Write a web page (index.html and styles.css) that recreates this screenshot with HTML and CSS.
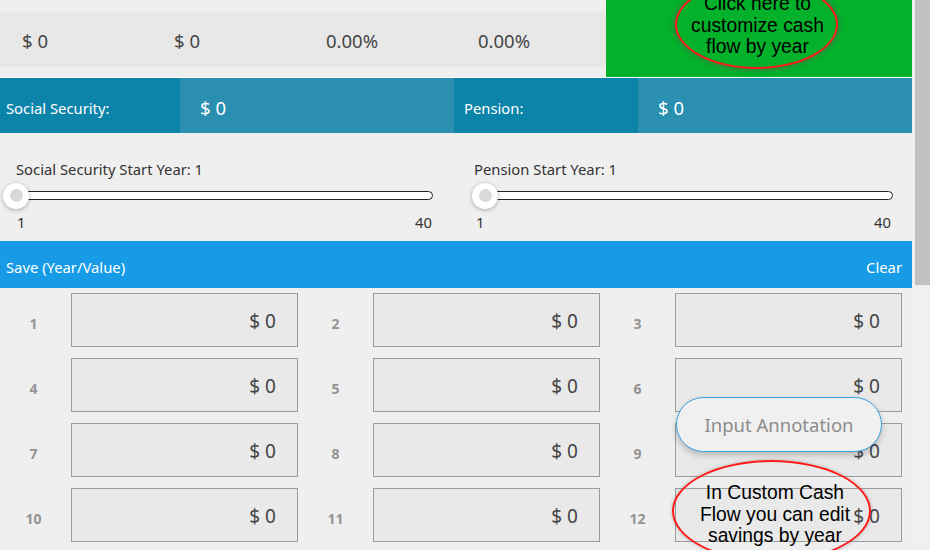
FILE: index.html
```html
<!DOCTYPE html>
<html lang="en">
<head>
<meta charset="utf-8">
<title>Cash Flow</title>
<link rel="stylesheet" href="styles.css">
</head>
<body>
<div class="page">
  <main class="content">
    <section class="summary">
      <div class="summary-values">
        <span>$ 0</span><span>$ 0</span><span>0.00%</span><span>0.00%</span>
      </div>
      <div class="custom-btn"></div>
    </section>
    <section class="income">
      <div class="inc-label">Social Security:</div>
      <div class="inc-value">$ 0</div>
      <div class="inc-label inc-label-right">Pension:</div>
      <div class="inc-value inc-value-right">$ 0</div>
    </section>
    <section class="sliders">
      <div class="slider-col">
        <div class="slider-label">Social Security Start Year: 1</div>
        <div class="slider-track"><span class="thumb"><span class="thumb-dot"></span></span></div>
        <div class="slider-scale"><span>1</span><span>40</span></div>
      </div>
      <div class="slider-col slider-col-right">
        <div class="slider-label">Pension Start Year: 1</div>
        <div class="slider-track"><span class="thumb"><span class="thumb-dot"></span></span></div>
        <div class="slider-scale"><span>1</span><span>40</span></div>
      </div>
    </section>
    <header class="save-bar"><span>Save (Year/Value)</span><span>Clear</span></header>
    <section class="year-grid">
      <div class="cell"><span class="yr">1</span><div class="box">$ 0</div></div>
      <div class="cell"><span class="yr">2</span><div class="box">$ 0</div></div>
      <div class="cell"><span class="yr">3</span><div class="box">$ 0</div></div>
      <div class="cell"><span class="yr">4</span><div class="box">$ 0</div></div>
      <div class="cell"><span class="yr">5</span><div class="box">$ 0</div></div>
      <div class="cell"><span class="yr">6</span><div class="box">$ 0</div></div>
      <div class="cell"><span class="yr">7</span><div class="box">$ 0</div></div>
      <div class="cell"><span class="yr">8</span><div class="box">$ 0</div></div>
      <div class="cell"><span class="yr">9</span><div class="box">$ 0</div></div>
      <div class="cell"><span class="yr">10</span><div class="box">$ 0</div></div>
      <div class="cell"><span class="yr">11</span><div class="box">$ 0</div></div>
      <div class="cell"><span class="yr">12</span><div class="box">$ 0</div></div>
    </section>
  </main>
  <div class="scrollbar"><div class="scroll-thumb"></div></div>

  <div class="note note-top">Click here to<br>customize cash<br>flow by year</div>
  <div class="pill">Input Annotation</div>
  <div class="note note-bottom">In Custom Cash<br>Flow you can edit<br>savings by year</div>
</div>
</body>
</html>
```
FILE: styles.css
```css
* { box-sizing: border-box; }
html, body { margin: 0; padding: 0; }
body {
  background: #efefef;
  font-family: "Noto Sans", "Open Sans", sans-serif;
  color: #333;
  overflow: hidden;
  width: 930px;
  height: 550px;
}
.page {
  position: relative;
  display: flex;
  width: 930px;
  height: 550px;
  overflow: hidden;
}
.content {
  width: 912px;
  flex: none;
}
.scrollbar {
  width: 18px;
  padding-left: 3px;
  background: #f0f0f0;
}
.scroll-thumb {
  height: 285px;
  background: #c1c1c1;
}

/* summary row */
.summary {
  display: flex;
  height: 77px;
}
.summary-values {
  width: 606px;
  height: 55px;
  margin-top: 12px;
  padding-top: 2px;
  background: #e8e8e8;
  display: grid;
  grid-template-columns: repeat(4, 152px);
  align-items: center;
  padding-left: 22px;
  font-size: 18.5px;
  color: #444;
}
.custom-btn {
  width: 306px;
  height: 77px;
  background: #03b12a;
}

/* income row */
.income {
  display: flex;
  height: 56px;
  border-top: 1px solid #ffffff;
}
.inc-label {
  width: 180px;
  background: #0c83a9;
  color: #fff;
  font-size: 14.8px;
  display: flex;
  align-items: center;
  padding-left: 6px;
  padding-top: 4px;
}
.inc-label-right {
  width: 184px;
  padding-left: 10px;
}
.inc-value {
  width: 274px;
  background: #2a8fb0;
  color: #fff;
  font-size: 18.5px;
  display: flex;
  align-items: center;
  padding-left: 20px;
  padding-top: 3px;
}
.inc-value-right { flex: 1; }

/* sliders */
.sliders {
  display: flex;
  height: 108px;
}
.slider-col {
  width: 454px;
  padding: 26px 21px 0 16px;
}
.slider-col-right {
  width: 458px;
  padding: 26px 20px 0 20px;
}
.slider-label {
  font-size: 14.8px;
  line-height: 20px;
  color: #333;
}
.slider-track {
  position: relative;
  height: 9px;
  margin-top: 12px;
  border: 1px solid #222;
  border-radius: 5px;
  background: #fff;
}
.slider-col-right .slider-track { margin-left: 11px; margin-right: -1px; }
.thumb {
  position: absolute;
  left: -14px;
  top: -9.5px;
  width: 26px;
  height: 26px;
  border-radius: 50%;
  background: #fff;
  box-shadow: 0 1px 4px rgba(0,0,0,0.3);
  display: flex;
  align-items: center;
  justify-content: center;
}
.thumb-dot {
  width: 13px;
  height: 13px;
  border-radius: 50%;
  background: #d9d9d9;
}
.slider-scale {
  display: flex;
  justify-content: space-between;
  margin-top: 12px;
  padding: 0 1px 0 1px;
  font-size: 14.8px;
  line-height: 20px;
  color: #333;
}
.slider-col-right .slider-scale { padding: 0 1px 0 2px; }

/* save header */
.save-bar {
  height: 47px;
  background: #179be6;
  color: #fff;
  font-size: 14.8px;
  display: flex;
  align-items: center;
  justify-content: space-between;
  padding: 4px 10px 0 6px;
}

/* year grid */
.year-grid {
  display: grid;
  grid-template-columns: repeat(3, 302px);
  grid-auto-rows: 54px;
  row-gap: 11px;
  padding-top: 5px;
}
.cell {
  display: flex;
  align-items: center;
}
.yr {
  width: 67px;
  text-align: center;
  font-size: 14px;
  font-weight: bold;
  color: #949494;
  padding-top: 6px;
}
.box {
  width: 227px;
  height: 54px;
  margin-left: 4px;
  border: 1px solid #9c9c9c;
  background: #e9e9e9;
  display: flex;
  align-items: center;
  justify-content: flex-end;
  padding-right: 21px;
  padding-top: 2px;
  font-size: 19px;
  color: #444;
}

/* annotations */
.note {
  position: absolute;
  border: 2px solid #ff1a1a;
  border-radius: 50%;
  font-family: "Liberation Sans", Arial, sans-serif;
  font-size: 19.3px;
  color: #000;
  text-align: center;
  display: flex;
  align-items: center;
  justify-content: center;
  line-height: 21.5px;
  white-space: nowrap;
}
.note-top {
  left: 675px;
  top: -20px;
  width: 163px;
  height: 89px;
  padding-top: 2px;
  padding-left: 2px;
  box-shadow: 0 0 4px 2px rgba(90,90,90,0.45);
}
.note-bottom {
  left: 672px;
  top: 460px;
  width: 199px;
  height: 102px;
  padding-top: 7px;
  padding-left: 7px;
  box-shadow: 0 0 3px 1px rgba(90,90,90,0.25);
}
.pill {
  position: absolute;
  left: 676px;
  top: 397px;
  width: 206px;
  height: 55px;
  border: 1px solid #36a0e2;
  border-radius: 28px;
  background: #f0f0f0;
  box-shadow: 0 3px 6px rgba(0,0,0,0.22);
  color: #8c8c8c;
  font-size: 18.5px;
  display: flex;
  align-items: center;
  justify-content: center;
}
```
